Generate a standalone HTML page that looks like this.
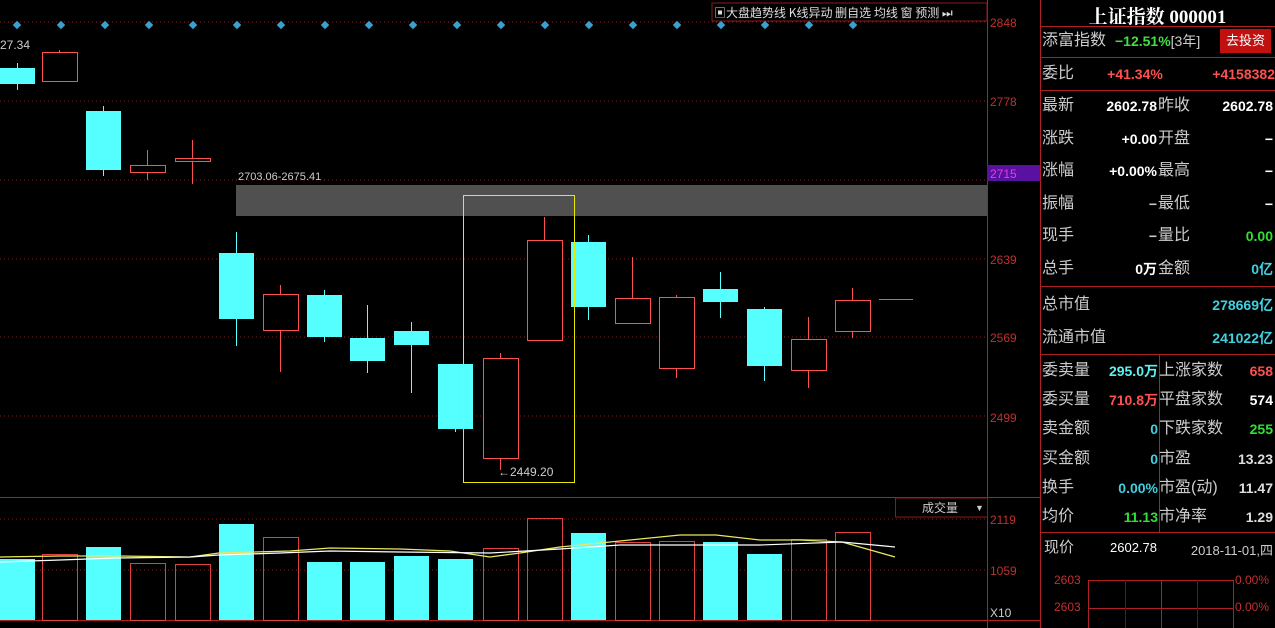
<!DOCTYPE html>
<html><head><meta charset="utf-8"><style>
body{margin:0;background:#000;width:1275px;height:628px;overflow:hidden;font-family:"Liberation Sans","Noto Sans CJK SC",sans-serif;}
.p{position:absolute;white-space:nowrap;}
.rp{position:absolute;left:1040px;top:0;width:235px;height:628px;}
.l{position:absolute;left:2px;color:#ccc;font-size:16px;line-height:20px;white-space:nowrap;}
.v{position:absolute;font-size:14px;font-weight:bold;text-align:right;line-height:20px;white-space:nowrap;}
</style></head><body>
<svg width="1040" height="628" style="position:absolute;left:0;top:0" font-family="Liberation Sans" >
<g stroke="#8a1a1a" stroke-dasharray="1,3">
<line x1="0" y1="22" x2="987" y2="22"/><line x1="0" y1="101" x2="987" y2="101"/><line x1="0" y1="180" x2="987" y2="180"/><line x1="0" y1="259" x2="987" y2="259"/><line x1="0" y1="337" x2="987" y2="337"/><line x1="0" y1="416" x2="987" y2="416"/>
<line x1="0" y1="519" x2="987" y2="519"/><line x1="0" y1="570" x2="987" y2="570"/>
</g>
<line x1="987.5" y1="0" x2="987.5" y2="628" stroke="#b02020"/>
<line x1="0" y1="497.5" x2="1040" y2="497.5" stroke="#b02020"/>
<line x1="0" y1="620.5" x2="1040" y2="620.5" stroke="#b02020"/>
<rect x="236" y="185" width="751" height="31" fill="#505050"/>
<text x="238" y="180" fill="#ccc" font-size="11">2703.06-2675.41</text>
<text x="0" y="49" fill="#ccc" font-size="12">27.34</text>
<rect x="463.5" y="195.5" width="111" height="287" fill="none" stroke="#e8e800"/>
<text x="498" y="476" fill="#ccc" font-size="12">←2449.20</text>
<g fill="#c03030" font-size="12"><text x="990" y="27">2848</text><text x="990" y="106">2778</text><text x="990" y="264">2639</text><text x="990" y="342">2569</text><text x="990" y="422">2499</text><text x="990" y="524">2119</text><text x="990" y="575">1059</text></g>
<rect x="987" y="165" width="53" height="16" fill="#5a10a0"/>
<text x="990" y="178" fill="#e040e0" font-size="12">2715</text>
<text x="990" y="617" fill="#ccc" font-size="12">X10</text>
<rect x="895.5" y="498" width="92" height="19" fill="none" stroke="#8a1a1a"/>
<text x="922" y="512" fill="#ccc" font-size="12" font-family="Noto Sans CJK SC">成交量</text>
<text x="975" y="511" fill="#ccc" font-size="9">▼</text>
<rect x="712" y="3" width="275" height="18" fill="#000" stroke="#8a1a1a"/>
<text x="714" y="17" fill="#ddd" font-size="12" font-family="Noto Sans CJK SC">▣大盘趋势线 K线异动 删自选 均线 窗 预测 ⏭</text>
<polyline fill="none" stroke="#e8e860" stroke-width="1.3" points="0,557 60,556 116,556 190,557 219,553 290,551 330,548 400,549 450,551 490,557 520,553 560,547 620,541 680,535 716,535 760,540 800,540 842,542 895,557"/>
<polyline fill="none" stroke="#fff" stroke-width="1.2" points="0,562 60,560 116,558 190,557 219,555 280,553 330,551 400,552 490,553 560,549 620,545 680,545 760,545 842,542 895,547"/>
</svg>
<script>
const NS="http://www.w3.org/2000/svg";const svg=document.querySelector('svg');
const ref=svg.querySelector('rect[stroke="#e8e800"]');
const lines=svg.querySelectorAll('polyline');
function el(t,a,before){const e=document.createElementNS(NS,t);for(const k in a)e.setAttribute(k,a[k]);svg.insertBefore(e,before||ref);}
for(let i=0;i<20;i++){const x=18+i*44;el('rect',{x:x-4,y:22,width:6,height:6,fill:'#3aa0d0',transform:`rotate(45 ${x-1} 25)`});}
const C=[[0,1,68,84,63,90],[42,0,52,81,50,81],[86,1,111,170,106,176],[130,0,165,172,150,180],[175,0,158,161,140,184],[219,1,253,319,232,346],[263,0,294,330,285,372],[307,1,295,337,290,342],[350,1,338,361,305,373],[394,1,331,345,322,393],[438,1,364,429,364,432],[483,0,358,458,353,470],[527,0,240,340,217,340],[571,1,242,307,235,320],[615,0,298,323,257,323],[659,0,297,368,295,378],[703,1,289,302,272,318],[747,1,309,366,307,381],[791,0,339,370,317,388],[835,0,300,331,288,338]];
const V=[559,554,547,563,564,524,537,562,562,556,559,548,518,533,542,541,542,554,539,532];
C.forEach((c,i)=>{const[x,up,t,b,h,l]=c;const cx=x+17.5;const col=up?'#55ffff':'#ff5050';
el('line',{x1:cx,y1:h,x2:cx,y2:l,stroke:col});
if(up)el('rect',{x:x,y:t,width:35,height:b-t,fill:col});else{el('rect',{x:x+.5,y:t+.5,width:35,height:b-t,fill:'#000',stroke:col});}
const vt=V[i];if(up)el('rect',{x:x,y:vt,width:35,height:620-vt,fill:col},lines[0]);else el('rect',{x:x+.5,y:vt+.5,width:35,height:620-vt,fill:'none',stroke:'#e04040'},lines[0]);});
el('line',{x1:879,y1:299.5,x2:913,y2:299.5,stroke:'#ff5050'});
</script>
<div class="rp">
<div style="position:absolute;left:0;top:0;width:1px;height:628px;background:#b02020"></div>
<div class="p" style="left:0;width:235px;text-align:center;top:2px;color:#fff;font-size:19px;font-weight:bold;font-family:'Liberation Serif','Noto Serif CJK SC',serif">上证指数 000001</div>
<div style="position:absolute;left:0;width:235px;top:26px;height:1px;background:#b02020"></div>
<div style="position:absolute;left:0;width:235px;top:57px;height:1px;background:#b02020"></div>
<div style="position:absolute;left:0;width:235px;top:90px;height:1px;background:#b02020"></div>
<div style="position:absolute;left:0;width:235px;top:286px;height:1px;background:#b02020"></div>
<div style="position:absolute;left:0;width:235px;top:354px;height:1px;background:#b02020"></div>
<div style="position:absolute;left:0;width:235px;top:532px;height:1px;background:#b02020"></div>
<div style="position:absolute;left:119px;width:1px;top:354px;height:178px;background:#b02020"></div>
<div class="l" style="top:31px">添富指数</div><div class="v" style="left:75px;top:31px;color:#40e040">−12.51%<span style="color:#ccc;font-weight:normal">[3年]</span></div>
<div class="p" style="left:180px;top:29px;width:51px;height:24px;background:#c01010;color:#fff;font-size:13px;text-align:center;line-height:24px">去投资</div>
<div class="l" style="top:64px">委比</div><div class="v" style="left:55px;top:64px;width:80px;color:#ff5050;text-align:center">+41.34%</div><div class="v" style="right:0;top:64px;color:#ff5050">+4158382</div>
<div id="rows"></div>
</div>
<script>
const R=[[106,'最新','2602.78','#fff','昨收','2602.78','#fff'],[139,'涨跌','+0.00','#fff','开盘','−','#fff'],[171,'涨幅','+0.00%','#fff','最高','−','#fff'],[204,'振幅','−','#ccc','最低','−','#fff'],[236,'现手','−','#ccc','量比','0.00','#30e030'],[269,'总手','0万','#fff','金额','0亿','#40d0e0']];
let h='';R.forEach(r=>{h+=`<div class="l" style="top:${r[0]-10}px">${r[1]}</div><div class="v" style="right:118px;top:${r[0]-10}px;color:${r[3]}">${r[2]}</div><div class="l" style="left:118px;top:${r[0]-10}px">${r[4]}</div><div class="v" style="right:2px;top:${r[0]-10}px;color:${r[6]}">${r[5]}</div>`;});
h+=`<div class="l" style="top:295px">总市值</div><div class="v" style="right:2px;top:295px;color:#40d0e0">278669亿</div><div class="l" style="top:328px">流通市值</div><div class="v" style="right:2px;top:328px;color:#40d0e0">241022亿</div>`;
const S=[[371,'委卖量','295.0万','#60f0f0','上涨家数','658','#ff5050'],[400,'委买量','710.8万','#ff5050','平盘家数','574','#fff'],[429,'卖金额','0','#40d0e0','下跌家数','255','#30e030'],[459,'买金额','0','#40d0e0','市盈','13.23','#ddd'],[488,'换手','0.00%','#40d0e0','市盈(动)','11.47','#ddd'],[517,'均价','11.13','#30e030','市净率','1.29','#ddd']];
S.forEach(r=>{h+=`<div class="l" style="top:${r[0]-10}px">${r[1]}</div><div class="v" style="right:117px;top:${r[0]-10}px;color:${r[3]}">${r[2]}</div><div class="l" style="left:119px;top:${r[0]-10}px">${r[4]}</div><div class="v" style="right:2px;top:${r[0]-10}px;color:${r[6]}">${r[5]}</div>`;});
h+=`<div class="l" style="top:538px;left:4px;font-size:15px">现价</div><div class="p" style="left:70px;top:540px;color:#fff;font-size:13px">2602.78</div><div class="p" style="right:2px;top:540px;color:#ccc;font-size:13px">2018-11-01,四</div>`;
h+=`<div class="p" style="left:14px;top:573px;color:#c03030;font-size:12px">2603</div><div class="p" style="left:14px;top:600px;color:#c03030;font-size:12px">2603</div><div class="p" style="left:195px;top:573px;color:#c03030;font-size:12px">0.00%</div><div class="p" style="left:195px;top:600px;color:#c03030;font-size:12px">0.00%</div>`;
h+=`<div style="position:absolute;left:48px;top:580px;width:144px;height:48px;border-left:1px solid #b02020;border-right:1px solid #b02020"><div style="position:absolute;left:0;right:0;top:0;height:1px;background:#b02020"></div><div style="position:absolute;left:0;right:0;top:28px;height:1px;background:#b02020"></div><div style="position:absolute;left:72px;top:0;bottom:0;width:1px;background:#b02020"></div><div style="position:absolute;left:36px;top:0;bottom:0;width:1px;background:#6a1010"></div><div style="position:absolute;left:108px;top:0;bottom:0;width:1px;background:#6a1010"></div></div>`;
document.getElementById('rows').outerHTML=h;
</script>
</body></html>
